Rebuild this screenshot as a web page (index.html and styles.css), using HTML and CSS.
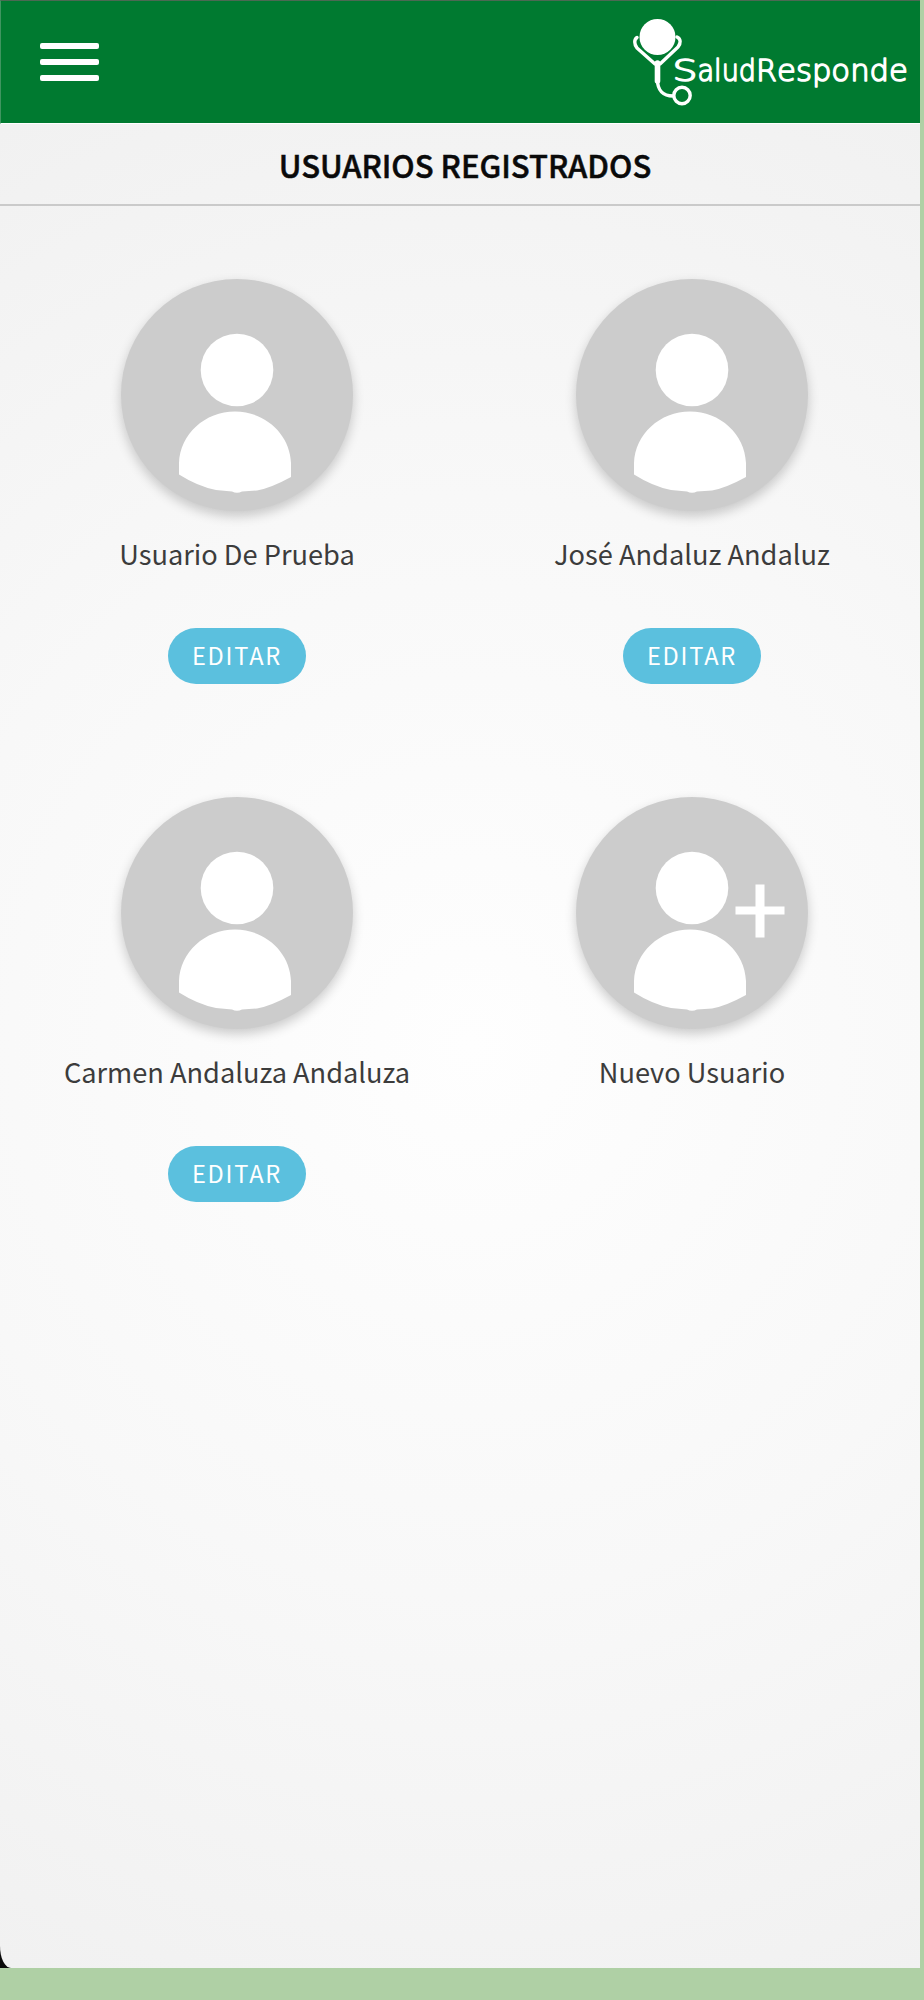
FILE: index.html
```html
<!DOCTYPE html>
<html lang="es">
<head>
<meta charset="utf-8">
<title>Salud Responde</title>
<link rel="stylesheet" href="styles.css">
</head>
<body>
<svg class="sprite" aria-hidden="true">
  <symbol id="person" viewBox="0 0 232 232">
    <circle cx="116" cy="91" r="36.3"/>
    <path d="M58 195.500V184C59 155 84 132.500 114 132.500S169 155 170 184V198Q150 209 136 211.500L121 212.500Q116 215 111 212.500L95 211Q77 207.500 58 195.500Z"/>
  </symbol>
</svg>
<div class="frame">
<div class="screen">
  <header class="topbar">
    <button class="menu" aria-label="Menú"><span></span><span></span><span></span></button>
    <svg class="logo" viewBox="0 0 292 123" aria-label="SaludResponde">
      <circle class="solid" cx="37.500" cy="37" r="18"/>
      <path class="tube" d="M17 37.500C14 39.500 14 44 17 48L35 64H40L58 47C61 43 61 39 57 37"/>
      <path class="stem" d="M37.500 63V81"/>
      <path class="tube" d="M37.500 80C37.500 90 43 96 53 96"/>
      <circle class="tube" cx="62" cy="95.500" r="8.200"/>
      <g class="wordmark">
        <text x="52.500" y="81" textLength="25" lengthAdjust="spacingAndGlyphs">S</text>
        <text x="77.500" y="81" textLength="58.500" lengthAdjust="spacingAndGlyphs">alud</text>
        <text x="136" y="81" textLength="21" lengthAdjust="spacingAndGlyphs">R</text>
        <text x="157" y="81" textLength="131" lengthAdjust="spacingAndGlyphs">esponde</text>
      </g>
    </svg>
  </header>
  <h1 class="title">USUARIOS REGISTRADOS</h1>
  <main class="users">
    <section class="user">
      <div class="avatar"><svg viewBox="0 0 232 232"><use href="#person"/></svg></div>
      <p class="name">Usuario De Prueba</p>
      <button class="edit">EDITAR</button>
    </section>
    <section class="user">
      <div class="avatar"><svg viewBox="0 0 232 232"><use href="#person"/></svg></div>
      <p class="name">José Andaluz Andaluz</p>
      <button class="edit">EDITAR</button>
    </section>
    <section class="user">
      <div class="avatar"><svg viewBox="0 0 232 232"><use href="#person"/></svg></div>
      <p class="name">Carmen Andaluza Andaluza</p>
      <button class="edit">EDITAR</button>
    </section>
    <section class="user">
      <div class="avatar"><svg viewBox="0 0 232 232"><use href="#person"/><path d="M179.500 87.500h9v22h20v8h-20v23h-9v-23h-20v-8h20z"/></svg></div>
      <p class="name">Nuevo Usuario</p>
    </section>
  </main>
</div>
</div>
</body>
</html>
```
FILE: styles.css
```css
* { box-sizing: border-box; }
body {
  margin: 0;
  background: #afd0a5;
  font-family: "Noto Sans CJK SC", "Noto Sans", sans-serif;
}
.sprite { display: none; }
.frame {
  width: 920px;
  height: 1968px;
  background: linear-gradient(90deg, #0a0a0a 50%, #afd0a5 50%);
}
.screen {
  height: 100%;
  border-radius: 0 0 0 11px / 0 0 0 22px;
  background: radial-gradient(circle at 470px 1045px, #fefefe 0, #f8f8f8 550px, #f2f2f2 960px, #f0f0f0 1100px);
}
.topbar {
  display: flex;
  justify-content: space-between;
  height: 124px;
  background: #007a30;
  border-top: 1px solid #4c6953;
  border-left: 1px solid #3f9560;
  border-bottom: 1px solid #fff;
}
.menu {
  display: flex;
  flex-direction: column;
  gap: 9.500px;
  margin: 41.500px 0 0 39px;
  padding: 0;
  width: 59px;
  height: 40px;
  border: 0;
  background: none;
}
.menu span { width: 59px; height: 6.500px; border-radius: 2px; background: #fff; }
.logo { width: 292px; height: 123px; margin: -1px 8px 0 0; overflow: visible; }
.solid { fill: #fff; }
.tube { fill: none; stroke: #fff; stroke-width: 3.400; stroke-linecap: round; stroke-linejoin: round; }
.stem { stroke: #fff; stroke-width: 5.600; stroke-linecap: round; }
.wordmark {
  font-family: "DejaVu Sans", sans-serif;
  font-weight: 200;
  font-size: 30.500px;
  fill: #fff;
  stroke: #fff;
  stroke-width: 1.500px;
  stroke-linejoin: round;
}
.title {
  height: 82px;
  margin: 0;
  padding-left: 10px;
  border-bottom: 2px solid #cacaca;
  color: #0a0a0a;
  font-size: 31px;
  font-weight: 500;
  line-height: 82px;
  text-align: center;
  -webkit-text-stroke: .5px #0a0a0a;
}
.users {
  display: grid;
  grid-template-columns: 455px 455px;
  grid-auto-rows: 518px;
  padding: 73px 0 0 9.500px;
}
.user { display: flex; flex-direction: column; align-items: center; }
.avatar {
  width: 232px;
  height: 232px;
  border-radius: 50%;
  background: #ccc;
  box-shadow: 0 5px 12px rgba(0, 0, 0, .2);
}
.avatar svg { display: block; width: 100%; fill: #fff; }
.name {
  height: 44px;
  margin: 20px 0 0;
  color: #3c3c3c;
  font-size: 27.200px;
  line-height: 44px;
  white-space: nowrap;
}
.edit {
  width: 138px;
  height: 56px;
  margin-top: 53px;
  padding: 0 0 2px;
  border: 0;
  border-radius: 28px;
  background: #5bc0de;
  color: #fff;
  font: 23.600px/54px "Noto Sans CJK SC", "Noto Sans", sans-serif;
  letter-spacing: 1.800px;
}
```
